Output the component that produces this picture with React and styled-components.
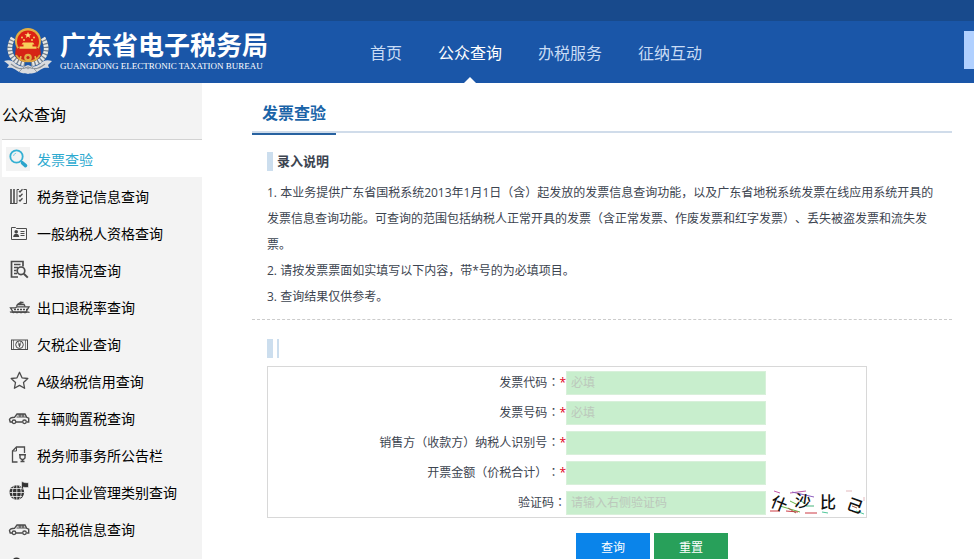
import React, { useState } from "react";
import styled, { createGlobalStyle, css } from "styled-components";

const GlobalStyle = createGlobalStyle`
  * {
    box-sizing: border-box;
  }
  body {
    margin: 0;
    background-color: #ffffff;
    color: #3c4450;
    font-family: "Open Sans", "Noto Sans CJK SC", sans-serif;
    font-size: 12px;
    text-spacing-trim: space-all;
  }
  h1, h2, h3, p, ul, ol {
    margin: 0;
    padding: 0;
    list-style: none;
  }
  a {
    color: inherit;
    text-decoration: none;
  }
`;

const NAV_ITEMS = ["首页", "公众查询", "办税服务", "征纳互动"];

const MENU_ITEMS = [
  { label: "发票查验", icon: "search" },
  { label: "税务登记信息查询", icon: "register" },
  { label: "一般纳税人资格查询", icon: "card" },
  { label: "申报情况查询", icon: "report" },
  { label: "出口退税率查询", icon: "ship" },
  { label: "欠税企业查询", icon: "money" },
  { label: "A级纳税信用查询", icon: "star" },
  { label: "车辆购置税查询", icon: "car" },
  { label: "税务师事务所公告栏", icon: "notice" },
  { label: "出口企业管理类别查询", icon: "globe" },
  { label: "车船税信息查询", icon: "car" },
  { label: "", icon: "person" },
];

const FIELDS = [
  { id: "fpdm", label: "发票代码", required: true, placeholder: "必填" },
  { id: "fphm", label: "发票号码", required: true, placeholder: "必填" },
  { id: "nsrsbh", label: "销售方（收款方）纳税人识别号", required: true },
  { id: "kpje", label: "开票金额（价税合计）", required: true },
  { id: "yzm", label: "验证码", placeholder: "请输入右侧验证码", captcha: true },
];

const ICONS = {
  search: (
    <>
      <circle cx="10.5" cy="9.5" r="6.2" stroke="#35b0d3" strokeWidth="1.8" />
      <path d="M7.5 9a3.2 3.2 0 0 1 2.6-2.8" stroke="#7fd0e6" />
      <path d="M15 14l1.500 1.500" stroke="#35b0d3" strokeWidth="1.8" />
      <path d="M16.5 16l3 2.600" stroke="#2ba4cb" strokeWidth="3.600" strokeLinecap="round" />
    </>
  ),
  register: (
    <>
      <path d="M5 5v14.5M8 5v14.5" strokeWidth="1.6" />
      <path d="M4 19.500h7M11 19.500V5.500h2M17.500 5.500h3v14h-3" />
      <path d="M13 7l1 1 2.500-2.800M13 11.500l1 1 2.500-2.800M13 16l1 1 2.500-2.800" strokeWidth="1.300" />
    </>
  ),
  card: (
    <>
      <path d="M5.500 6.500h4l1 1h10v11h-15z" />
      <circle cx="10.200" cy="10.800" r="1.800" fill="#444444" stroke="none" />
      <path d="M7.200 16c0-4.500 6-4.500 6 0z" fill="#444444" stroke="none" />
      <path d="M14.500 10.500h4M14.500 12.500h4M14.500 14.500h4" strokeWidth="1.200" />
    </>
  ),
  report: (
    <>
      <path d="M12 19H5.500V3.500H17v5" strokeWidth="1.700" />
      <path d="M8 6.500h6.500M8 9.500h4M8 12.500h2.500M8 15.500h3" strokeWidth="1.300" />
      <circle cx="15" cy="12.800" r="3.800" strokeWidth="1.700" />
      <path d="M17.800 15.800l4 3.800" strokeWidth="2" />
    </>
  ),
  ship: (
    <>
      <path d="M4.500 12.800h5l1.500-1h12l-3 5H7z" strokeWidth="1.300" />
      <path d="M10.500 11.500l1-2h6.500l1 2M14.800 9.500V6.500M12 9l2.500-1.500h3" strokeWidth="1.400" />
      <path d="M8 14.500h13" strokeWidth="1.600" strokeDasharray="2 1" />
      <path d="M4 17.300c1.500-1.200 2.500 .7 4 0s2.500.7 4 0 2.500.7 4 0 2.500.7 4 0 2.500.2 3.500 0" strokeWidth="1.400" />
    </>
  ),
  money: (
    <>
      <rect x="5.500" y="8" width="16" height="9.500" />
      <circle cx="13.500" cy="12.700" r="3.800" />
      <path d="M12 10.300l1.500 2 1.500-2M13.500 12.300v3M12 12.900h3" />
      <path d="M7.500 8v9.500M19.500 8v9.500" strokeWidth="0.700" />
    </>
  ),
  star: (
    <path
      d="M13.500 3.300l2.500 5.500 5.800.700-4.300 4 1.100 5.800-5.100-2.900-5.100 2.900 1.100-5.800-4.300-4 5.800-.700z"
      strokeWidth="1.300"
      strokeLinejoin="round"
    />
  ),
  car: (
    <>
      <path
        d="M6 16H4.200l-.700-2.500c.500-1.500 2-2 5-2.200L11 8h8l1.700 3.300 2 .900v3.800h-2M10 16h6.500"
        strokeWidth="1.400"
      />
      <path d="M10.500 11h9.500M11.500 9h7M14 8v3M17 8v3" strokeWidth="1.200" />
      <circle cx="8" cy="15.800" r="1.800" strokeWidth="1.300" />
      <circle cx="18.500" cy="15.800" r="1.800" strokeWidth="1.300" />
    </>
  ),
  notice: (
    <>
      <path d="M11.500 19H6.500V8l4-4h8v6" strokeWidth="1.300" />
      <path d="M10.500 4v4h-4" />
      <path d="M13 11.800h7M14 12.300v2.700l1.800 1.500h1.500l1.700-1.500v-2.700M16.500 16.500v2M14.500 18.500h4" strokeWidth="1.400" />
    </>
  ),
  globe: (
    <>
      <circle cx="10.800" cy="12.500" r="7.300" fill="#333333" stroke="none" />
      <path
        d="M10.800 5v15M3.500 12.500h14.500M5 8.500h11M5 16.500h11M8.300 5.800c-2.500 4-2.500 9.500 0 13.400M13.300 5.800c2.500 4 2.500 9.500 0 13.400"
        stroke="#f3f3f3"
        strokeWidth="0.800"
      />
      <path d="M15.500 9V1.800h1.500c1.500 1.300 3 .7 5.500.9v4.800c-2.500 0-3.500.300-5-.500V9z" fill="#333333" stroke="#f3f3f3" strokeWidth="0.600" />
    </>
  ),
  person: (
    <>
      <circle cx="10.500" cy="8" r="4.500" fill="#333333" stroke="none" />
      <path d="M4 20c0-9 13-9 13 0z" fill="#333333" stroke="none" />
    </>
  ),
};

const MenuIcon = ({ name, active }) => (
  <IconBox viewBox="0 0 24 24" fill="none" stroke="#4c4c4c" $active={active} aria-hidden="true">
    {ICONS[name]}
  </IconBox>
);

const Emblem = () => (
  <EmblemSvg viewBox="0 0 48 48" aria-hidden="true">
    <path d="M9 10C2 22 7 34 21 36M39 10c7 12 2 24-12 26" fill="none" stroke="#76808c" strokeWidth="5" />
    <path
      d="M9 10C2 22 7 34 21 36M39 10c7 12 2 24-12 26"
      fill="none"
      stroke="#e6e8e6"
      strokeWidth="4.500"
      strokeDasharray="2.200 1.300"
    />
    <path d="M12 18l-1 9c3 6 8 7 13 7s10-1 13-7l-1-9z" fill="#c62818" />
    <path d="M12 27c3 5 7 6.500 12 6.500S33 32 36 27" fill="none" stroke="#dca640" strokeWidth="1.600" />
    <path d="M17 28l-1 4M31 28l1 4" stroke="#e6b64a" strokeWidth="1.600" />
    <path
      d="M0 33c6-2 9 0 12 3 4 3 8 3 12 1 4 2 8 2 12-1 3-3 6-5 12-3l-4 4 1 3c-6-1-7 1-12 4-4 2-7 1-9 2-2-1-5 0-9-2-5-3-6-5-12-4l2-3z"
      fill="#dadcdf"
    />
    <path d="M7 36c6 5 10 6 17 3 7 3 11 2 17-3" fill="none" stroke="#8b9299" strokeWidth="1.200" />
    <path d="M15 44l5-5M33 44l-5-5M20 38l4 3 4-3" fill="none" stroke="#989ea5" />
    <circle cx="24" cy="13" r="13" fill="#e2ae43" />
    <circle cx="24" cy="13.500" r="11" fill="#dc2014" />
    <path d="M14 20h20l2 6c-7 4-17 4-24 0z" fill="#d62416" />
    <path d="M24 3.800l.900 2.400h2.500l-2 1.500.8 2.400-2.200-1.500-2.200 1.500.8-2.400-2-1.500h2.500z" fill="#ffe27a" />
    <g fill="#f8cf5a">
      <circle cx="18" cy="9.500" r="1" />
      <circle cx="30" cy="9.500" r="1" />
      <circle cx="20" cy="12" r="1" />
      <circle cx="28" cy="12" r="1" />
      <path d="M19 14.500h10l1.500 2h-13zM19.500 16.500h9v2h-9zM15.500 18.500h17v2.300h-17z" />
    </g>
    <circle cx="24" cy="29.500" r="3.800" fill="#e0ae45" />
    <circle cx="24" cy="29.500" r="1.600" fill="#c62818" />
  </EmblemSvg>
);

const Captcha = () => (
  <CaptchaSvg viewBox="0 0 98 28" role="img" aria-label="验证码">
    <g fill="none">
      <path d="M6 2l6 2M22 4l16-2" stroke="#c35aa8" />
      <path d="M24 3l22 5" stroke="#8f5fc0" />
      <path d="M12 17l20 6M22 12l8 4" stroke="#63b545" />
      <path d="M2 22h10M18 22l12 1M37 24h12" stroke="#cc3a45" />
      <path d="M38 17h8M32 11l5 4" stroke="#45b47a" />
      <path d="M54 23l6 1M88 22l8 3" stroke="#4fc79a" />
      <path d="M20 19l8 5M84 17l5 2" stroke="#a05c45" />
      <path d="M78 2h6M96 8v4" stroke="#e3b9bd" />
    </g>
    <g fill="#111111" fontSize="16" fontFamily="Noto Sans CJK SC" fontWeight="500" textAnchor="middle">
      <text transform="translate(9 20) rotate(22)">什</text>
      <text transform="translate(34 18) rotate(8)">沙</text>
      <text x="60" y="19">比</text>
      <text transform="translate(85 22) rotate(20)">己</text>
    </g>
  </CaptchaSvg>
);

const Header = () => {
  const [current, setCurrent] = useState("公众查询");

  return (
    <HeaderBar>
      <Brand href="#">
        <Emblem />
        <BrandText>
          <BrandName>广东省电子税务局</BrandName>
          <BrandSub>GUANGDONG ELECTRONIC TAXATION BUREAU</BrandSub>
        </BrandText>
      </Brand>
      <Nav>
        {NAV_ITEMS.map(item => (
          <NavLink
            key={item}
            href="#"
            $active={item === current}
            onClick={() => setCurrent(item)}
          >
            {item}
          </NavLink>
        ))}
      </Nav>
      <HeaderBlock />
    </HeaderBar>
  );
};

const SideMenu = () => {
  const [selected, setSelected] = useState(0);

  return (
    <Sidebar>
      <SideTitle>公众查询</SideTitle>
      <MenuList>
        {MENU_ITEMS.map((item, i) => (
          <li key={i}>
            <MenuLink
              href="#"
              aria-label={item.label || "其他查询"}
              $active={i === selected}
              onClick={() => setSelected(i)}
            >
              <MenuIcon name={item.icon} active={i === selected} />
              {item.label}
            </MenuLink>
          </li>
        ))}
      </MenuList>
    </Sidebar>
  );
};

const InvoiceForm = () => (
  <form onSubmit={e => e.preventDefault()}>
    <FieldBox>
      {FIELDS.map(field => (
        <FieldRow key={field.id}>
          <FieldLabel htmlFor={field.id}>
            {field.label}
            <Colon>：</Colon>
            {field.required && <Star>*</Star>}
          </FieldLabel>
          <FieldCell>
            <TextInput id={field.id} type="text" placeholder={field.placeholder} />
            {field.captcha && <Captcha />}
          </FieldCell>
        </FieldRow>
      ))}
    </FieldBox>
    <Buttons>
      <Button type="submit" $color="#0a84ea">
        查询
      </Button>
      <Button type="reset" $color="#28a05a">
        重置
      </Button>
    </Buttons>
  </form>
);

const App = () => (
  <Page>
    <GlobalStyle />
    <TopStrip />
    <Header />
    <Body>
      <SideMenu />
      <Main>
        <TabBar>
          <Tab>发票查验</Tab>
        </TabBar>
        <Section $divided>
          <SectionTitle>录入说明</SectionTitle>
          <Notes>
            <li>
              1. 本业务提供广东省国税系统2013年1月1日（含）起发放的发票信息查询功能，以及广东省地税系统发票在线应用系统开具的发票信息查询功能。可查询的范围包括纳税人正常开具的发票（含正常发票、作废发票和红字发票）、丢失被盗发票和流失发票。
            </li>
            <li>2. 请按发票票面如实填写以下内容，带*号的为必填项目。</li>
            <li>3. 查询结果仅供参考。</li>
          </Notes>
        </Section>
        <Section>
          <SectionTitle as="div">
            <TitleMark />
          </SectionTitle>
          <InvoiceForm />
        </Section>
      </Main>
    </Body>
  </Page>
);

const Page = styled.div`
  display: flex;
  flex-direction: column;
  height: 100vh;
  overflow: hidden;
`;

const TopStrip = styled.div`
  flex: none;
  height: 21px;
  background-color: #184a8c;
`;

const HeaderBar = styled.header`
  flex: none;
  display: flex;
  align-items: center;
  height: 62px;
  background-color: #1a56a8;
`;

const Brand = styled.a`
  display: flex;
  align-items: center;
  gap: 8px;
  width: 370px;
  padding-left: 4px;
  color: #ffffff;
`;

const EmblemSvg = styled.svg`
  width: 48px;
  height: 48px;
`;

const BrandText = styled.div`
  display: flex;
  flex-direction: column;
`;

const BrandName = styled.h1`
  font-size: 26px;
  line-height: 28px;
  font-weight: 700;
`;

const BrandSub = styled.span`
  font-family: "Liberation Serif", serif;
  font-size: 9px;
  line-height: 14px;
`;

const Nav = styled.nav`
  display: flex;
  gap: 36px;
  height: 100%;
  padding-top: 2px;
`;

const NavLink = styled.a`
  position: relative;
  color: #c9dcf5;
  font-size: 16px;
  line-height: 60px;

  ${props =>
    props.$active &&
    css`
      color: #ffffff;

      &::after {
        content: "";
        position: absolute;
        bottom: 0;
        left: 50%;
        margin-left: -6px;
        border: 6px solid transparent;
        border-top: none;
        border-bottom-color: #ffffff;
      }
    `}
`;

const HeaderBlock = styled.div`
  align-self: flex-start;
  width: 10px;
  height: 38px;
  margin: 10px 0 0 auto;
  background-color: #b0d0ff;
`;

const Body = styled.div`
  flex: 1;
  display: flex;
  min-height: 0;
`;

const Sidebar = styled.aside`
  flex: none;
  width: 202px;
  background-color: #f3f3f3;
`;

const SideTitle = styled.h2`
  padding: 20px 2px 12px;
  color: #000000;
  font-size: 16px;
  line-height: 24px;
  font-weight: 400;
`;

const MenuList = styled.ul`
  margin-left: 2px;
  border-top: 1px solid #d2d2d2;
`;

const MenuLink = styled.a`
  display: flex;
  align-items: center;
  gap: 7px;
  height: 37px;
  padding-left: 4px;
  color: #000000;
  font-size: 14px;

  ${props =>
    props.$active &&
    css`
      background-color: #ffffff;
      color: #2eaad0;
    `}
`;

const IconBox = styled.svg`
  flex: none;
  width: 24px;
  height: 24px;
  background-color: ${props => (props.$active ? "#f3f3f3" : "transparent")};
`;

const Main = styled.main`
  flex: 1;
  min-width: 0;
  margin: 0 22px 0 50px;
`;

const TabBar = styled.div`
  display: flex;
  height: 50px;
  border-bottom: 2px solid #d0dcea;
`;

const Tab = styled.h2`
  height: 52px;
  padding: 18px 10px 0;
  border-bottom: 2px solid #2862a0;
  color: #1a64a8;
  font-size: 16px;
  line-height: 24px;
  font-weight: 700;
`;

const Section = styled.section`
  padding: 19px 15px 9px;
  border-bottom: ${props => (props.$divided ? "1px dashed #cccccc" : "none")};
`;

const SectionTitle = styled.h3`
  height: 19px;
  margin-bottom: 8px;
  padding-left: 4px;
  border-left: 6px solid #ccdeee;
  font-size: 13px;
  line-height: 19px;
  font-weight: 700;
`;

const TitleMark = styled.div`
  width: 2px;
  height: 100%;
  background-color: #ccdeee;
`;

const Notes = styled.ol`
  padding-top: 1px;
  line-height: 26px;
`;

const FieldBox = styled.div`
  max-width: 600px;
  border: 1px solid #d8d8d8;
`;

const FieldRow = styled.div`
  display: grid;
  grid-template-columns: 298px 1fr;
  height: 30px;
`;

const FieldLabel = styled.label`
  line-height: 30px;
  text-align: right;
`;

const Colon = styled.span`
  font-family: "Noto Sans CJK JP", sans-serif;
`;

const Star = styled.span`
  color: #e00020;
`;

const FieldCell = styled.div`
  display: flex;
  align-items: center;
  gap: 2px;
`;

const TextInput = styled.input`
  width: 200px;
  height: 24px;
  padding: 0 4px;
  border: 1px solid #d8f0da;
  background-color: #c8eecd;
  color: #3c4450;
  font: inherit;

  &::placeholder {
    color: #bcc8bc;
  }
`;

const CaptchaSvg = styled.svg`
  flex: 1;
  min-width: 0;
  height: 28px;
  overflow: visible;
`;

const Buttons = styled.div`
  display: flex;
  gap: 4px;
  margin-top: 15px;
  padding-left: 309px;
`;

const Button = styled.button`
  width: 74px;
  height: 28px;
  padding: 0;
  border: none;
  background-color: ${props => props.$color};
  color: #ffffff;
  font: inherit;
  cursor: pointer;
`;

export default App;
